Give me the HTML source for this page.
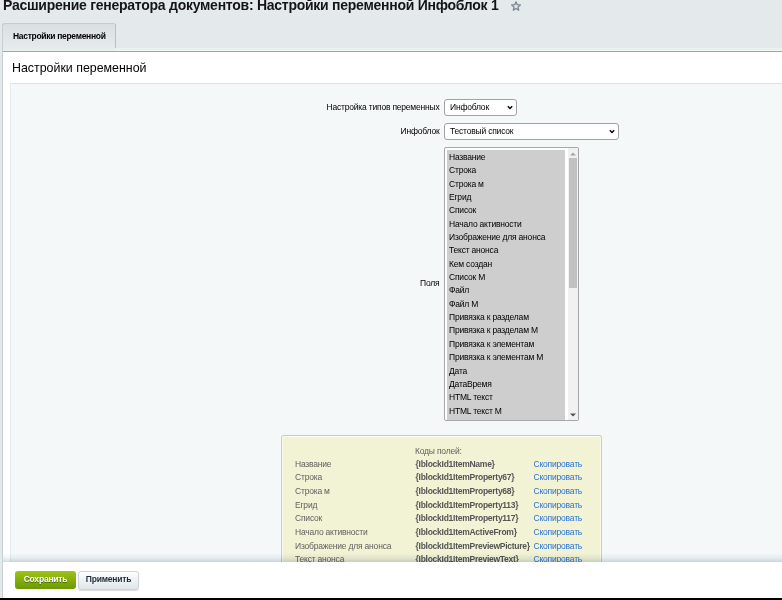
<!DOCTYPE html>
<html><head><meta charset="utf-8">
<style>
*{box-sizing:border-box}
html,body{margin:0;padding:0;width:782px;height:600px;overflow:hidden}
body{background:#e4eaeb;font-family:"Liberation Sans",sans-serif;position:relative;color:#000}
.abs{position:absolute}
.t8{font-size:8.5px;letter-spacing:-0.2px;white-space:nowrap;line-height:10px}
#title{left:3px;top:-3px;font-size:14px;letter-spacing:-0.26px;font-weight:bold;color:#151515;white-space:nowrap;line-height:16px}
#star{left:511px;top:1px}
#bgstrip{left:116px;top:48px;width:666px;height:3px;background:linear-gradient(#edf2f2,#e9eff0 50%,#f9fbfb)}
#tab{left:2px;top:23px;width:114px;height:28px;background:linear-gradient(#d9e0e3,#e5eaec 85%,#eaeff0);border:1px solid #c5cccf;border-bottom:none;border-right:none;border-radius:3px 3px 0 0}
#tabr{left:115px;top:24px;width:1px;height:24px;background:#b9c0c3}
#tabtxt{left:13px;top:31px;font-weight:bold;letter-spacing:-0.3px}
#lline{left:2px;top:24px;width:1px;height:574px;background:#c8ced1}
#content{left:3px;top:51px;width:779px;height:511px;background:#fff;border-top:1px solid #a0a7aa}
#hdr{left:12px;top:60.6px;font-size:12.4px;white-space:nowrap;line-height:14px;color:#000}
#inner{left:10px;top:83px;width:772px;height:479px;background:#f5f8f9;border-top:1px solid #dee3e5;border-left:1px solid #e5eaed}
.lbl{text-align:right}
.sel{background:#fff;border:1px solid #a3a3a3;border-radius:3px;padding-left:5px}
#list{left:444px;top:147px;width:135px;height:274px;border:1px solid #a7a7a7;border-radius:2px;background:#fff;overflow:hidden}
#opts{position:absolute;left:2px;top:2px;width:118px;background:#cecece}
.opt{padding-top:0.8px;height:13.37px;font-size:8.5px;letter-spacing:-0.2px;line-height:13.37px;padding-left:2px;white-space:nowrap;color:#000}
#sb{position:absolute;left:123px;top:0;width:10px;height:272px;background:#f1f1f1}
#thumb{position:absolute;left:1px;top:10px;width:8px;height:130px;background:#c1c1c1}
#ybox{left:281px;top:435px;width:321px;height:140px;background:#f2f2d5;border:1px solid #d8cf9f;border-top-color:#d3c7a8;border-radius:3px;box-shadow:inset 0 1px 0 #fdfdf4,inset -1px 0 0 #f9f9e6,inset 1px 0 0 #f9f9e6}
.yr{position:absolute;font-size:8.5px;letter-spacing:-0.2px;white-space:nowrap;line-height:10px}
.yl{color:#636260}
.yc{color:#555;font-weight:bold;letter-spacing:-0.26px}
.ya{color:#2a72d5}
#bar{left:3px;top:562px;width:779px;height:36px;background:#fff}
#shadow{left:3px;top:553px;width:779px;height:9px;background:linear-gradient(rgba(190,205,212,0),rgba(190,205,212,.25) 55%,rgba(175,192,200,.55));mix-blend-mode:multiply}
#black{left:0;top:598px;width:782px;height:2px;background:#000}
.btn{position:absolute;border-radius:3px;font-size:8.5px;letter-spacing:-0.2px;font-weight:bold;line-height:10px;text-align:center;white-space:nowrap}
#save{left:15px;top:571px;width:61px;height:18px;background:linear-gradient(#9dc414,#6c9806);color:#fff;padding-top:3.3px;text-shadow:0 1px 0 #4a6a00}
#apply{left:78px;top:571px;width:61px;height:19px;background:linear-gradient(#fdfefe,#dfe6e9);border:1px solid #cdd3d6;color:#1f2d3a;padding-top:1.8px;box-shadow:0 1px 1px rgba(0,0,0,.15)}
</style></head><body>
<div id="title" class="abs">Расширение генератора документов: Настройки переменной Инфоблок 1</div>
<svg id="star" class="abs" width="10" height="11" viewBox="0 0 10 11"><path d="M5.00 0.80 L6.23 3.70 L9.37 3.98 L7.00 6.05 L7.70 9.12 L5.00 7.50 L2.30 9.12 L3.00 6.05 L0.63 3.98 L3.77 3.70Z" fill="none" stroke="#7d8792" stroke-width="1.3" stroke-linejoin="round"/></svg>
<div id="bgstrip" class="abs"></div>
<div id="tab" class="abs"></div>
<div id="tabr" class="abs"></div>
<div id="tabtxt" class="abs t8">Настройки переменной</div>
<div id="content" class="abs"></div>
<div id="lline" class="abs"></div>
<div id="hdr" class="abs">Настройки переменной</div>
<div id="inner" class="abs"></div>

<div class="abs lbl t8" style="left:300px;width:139.5px;top:102px">Настройка типов переменных</div>
<div class="abs sel t8" style="left:444px;top:99px;width:73px;height:17px;padding-top:2px">Инфоблок</div>
<svg class="abs" style="left:507.3px;top:104.5px" width="6" height="5" viewBox="0 0 6 5"><path d="M0.8 1.2 L3 3.5 L5.2 1.2" fill="none" stroke="#000" stroke-width="1.4"/></svg>

<div class="abs lbl t8" style="left:300px;width:139.5px;top:126px">Инфоблок</div>
<div class="abs sel t8" style="left:444px;top:123px;width:175px;height:17px;padding-top:2px">Тестовый список</div>
<svg class="abs" style="left:609.2px;top:128.7px" width="6" height="5" viewBox="0 0 6 5"><path d="M0.8 1.2 L3 3.5 L5.2 1.2" fill="none" stroke="#000" stroke-width="1.4"/></svg>

<div class="abs lbl t8" style="left:300px;width:139.5px;top:278px">Поля</div>
<div id="list" class="abs">
 <div id="opts">
  <div class="opt">Название</div>
  <div class="opt">Строка</div>
  <div class="opt">Строка м</div>
  <div class="opt">Егрид</div>
  <div class="opt">Список</div>
  <div class="opt">Начало активности</div>
  <div class="opt">Изображение для анонса</div>
  <div class="opt">Текст анонса</div>
  <div class="opt">Кем создан</div>
  <div class="opt">Список М</div>
  <div class="opt">Файл</div>
  <div class="opt">Файл М</div>
  <div class="opt">Привязка к разделам</div>
  <div class="opt">Привязка к разделам М</div>
  <div class="opt">Привязка к элементам</div>
  <div class="opt">Привязка к элементам М</div>
  <div class="opt">Дата</div>
  <div class="opt">ДатаВремя</div>
  <div class="opt">HTML текст</div>
  <div class="opt">HTML текст М</div>
  <div class="opt">Детальный текст</div>
 </div>
 <div id="sb"><div id="thumb"></div>
  <svg style="position:absolute;left:2px;top:4px" width="6" height="4" viewBox="0 0 6 4"><path d="M0 3.5 L3 0.5 L6 3.5Z" fill="#a3a3a3"/></svg>
  <svg style="position:absolute;left:2px;top:264.5px" width="6" height="4" viewBox="0 0 6 4"><path d="M0 0.5 L3 3.5 L6 0.5Z" fill="#505050"/></svg>
 </div>
</div>

<div id="ybox" class="abs"></div>
<div class="yr yl" style="left:415px;top:445.6px">Коды полей:</div>
<div class="yr yl" style="left:295px;top:458.60px">Название</div><div class="yr yc" style="left:415.5px;top:458.60px">{IblockId1ItemName}</div><div class="yr ya" style="left:533.5px;top:458.60px">Скопировать</div>
<div class="yr yl" style="left:295px;top:472.26px">Строка</div><div class="yr yc" style="left:415.5px;top:472.26px">{IblockId1ItemProperty67}</div><div class="yr ya" style="left:533.5px;top:472.26px">Скопировать</div>
<div class="yr yl" style="left:295px;top:485.92px">Строка м</div><div class="yr yc" style="left:415.5px;top:485.92px">{IblockId1ItemProperty68}</div><div class="yr ya" style="left:533.5px;top:485.92px">Скопировать</div>
<div class="yr yl" style="left:295px;top:499.58px">Егрид</div><div class="yr yc" style="left:415.5px;top:499.58px">{IblockId1ItemProperty113}</div><div class="yr ya" style="left:533.5px;top:499.58px">Скопировать</div>
<div class="yr yl" style="left:295px;top:513.24px">Список</div><div class="yr yc" style="left:415.5px;top:513.24px">{IblockId1ItemProperty117}</div><div class="yr ya" style="left:533.5px;top:513.24px">Скопировать</div>
<div class="yr yl" style="left:295px;top:526.90px">Начало активности</div><div class="yr yc" style="left:415.5px;top:526.90px">{IblockId1ItemActiveFrom}</div><div class="yr ya" style="left:533.5px;top:526.90px">Скопировать</div>
<div class="yr yl" style="left:295px;top:540.56px">Изображение для анонса</div><div class="yr yc" style="left:415.5px;top:540.56px">{IblockId1ItemPreviewPicture}</div><div class="yr ya" style="left:533.5px;top:540.56px">Скопировать</div>
<div class="yr yl" style="left:295px;top:554.22px">Текст анонса</div><div class="yr yc" style="left:415.5px;top:554.22px">{IblockId1ItemPreviewText}</div><div class="yr ya" style="left:533.5px;top:554.22px">Скопировать</div>
<div class="yr yl" style="left:295px;top:567.88px">Кем создан</div><div class="yr yc" style="left:415.5px;top:567.88px">{IblockId1ItemCreatedBy}</div><div class="yr ya" style="left:533.5px;top:567.88px">Скопировать</div>

<div id="shadow" class="abs"></div>
<div id="bar" class="abs"></div>
<div class="abs" style="left:2px;top:562px;width:1px;height:36px;background:#c8ced1"></div>
<div id="save" class="btn">Сохранить</div>
<div id="apply" class="btn">Применить</div>
<div id="black" class="abs"></div>
</body></html>
